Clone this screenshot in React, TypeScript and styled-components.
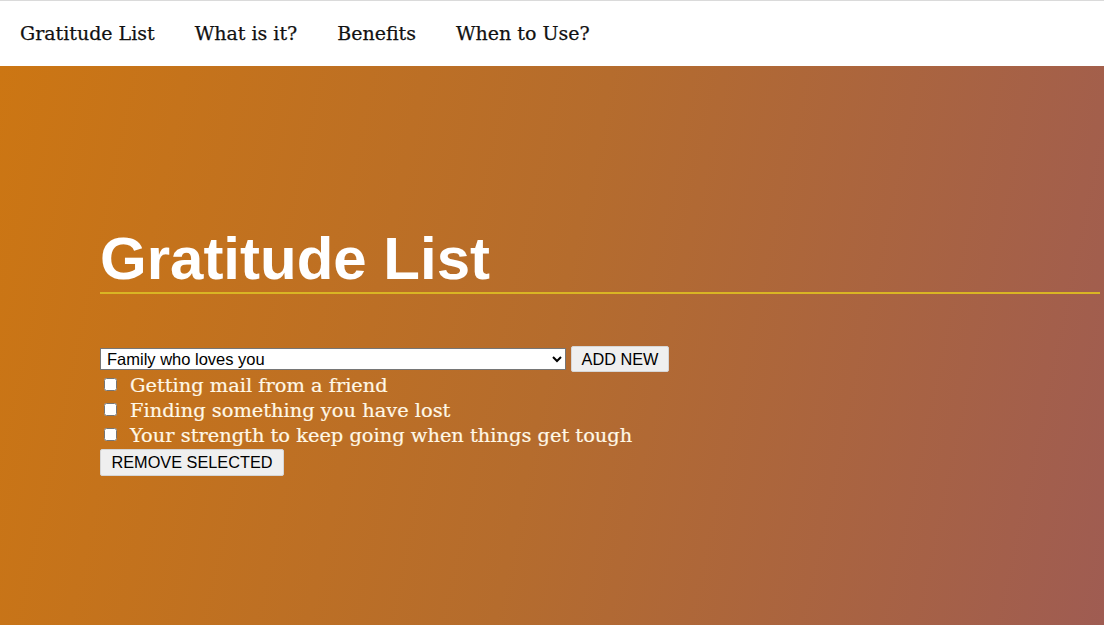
import React, { useState } from "react";
import styled, { createGlobalStyle } from "styled-components";

const Global = createGlobalStyle`
  html, body { margin: 0; padding: 0; }
  body { font-family: "DejaVu Serif", serif; background: #fff; }
`;

const Page = styled.div`
  display: flex;
  flex-direction: column;
  min-height: 625px;
`;

const Nav = styled.nav`
  display: flex;
  align-items: center;
  height: 65px;
  border-top: 1px solid #dadada;
  background: #fff;
`;

const NavItem = styled.a`
  font-family: "DejaVu Serif", serif;
  font-size: 19px;
  color: #111;
  text-decoration: none;
  padding: 0 20px 2px;
  line-height: 24px;
  -webkit-text-stroke: 0.25px #111;
`;

const Hero = styled.main`
  flex: 1;
  background: linear-gradient(102deg, #cc7613 0%, #b56c2d 50%, #9f5c52 100%);
  padding: 160px 4px 0 100px;
  display: flex;
  flex-direction: column;
`;

const Title = styled.h1`
  margin: 0;
  font-family: "Liberation Sans", Arial, sans-serif;
  font-weight: 700;
  font-size: 60px;
  line-height: 66px;
  color: #fff;
  border-bottom: 2px solid #d9b524;
`;

const Form = styled.div`
  margin-top: 52px;
  display: flex;
  flex-direction: column;
  align-items: flex-start;
`;

const AddRow = styled.div`
  display: flex;
  align-items: center;
  gap: 5px;
  height: 26px;
`;

const Select = styled.select`
  width: 466px;
  height: 22px;
  font-family: "Liberation Sans", Arial, sans-serif;
  font-size: 16.5px;
  color: #000;
  background: #fff;
  border: 1px solid #767676;
  border-radius: 0;
  padding: 0 2px;
  margin: 0;
`;

const Button = styled.button<{ $w: number; $h: number }>`
  width: ${(p) => p.$w}px;
  height: ${(p) => p.$h}px;
  font-family: "Liberation Sans", Arial, sans-serif;
  font-size: 16.3px;
  color: #000;
  background: #efefef;
  border: 1px solid #d6d6d6;
  border-radius: 2px;
  padding: 0;
  margin: 0;
`;

const List = styled.ul`
  list-style: none;
  margin: 0;
  padding: 0;
`;

const Item = styled.li`
  display: flex;
  align-items: center;
  height: 25px;
`;

const Check = styled.input`
  width: 13px;
  height: 13px;
  margin: 0 13px 0 4px;
`;

const Label = styled.label`
  font-family: "DejaVu Serif", serif;
  font-size: 19.4px;
  line-height: 25px;
  padding-top: 2px;
  color: #fff8e7;
  white-space: nowrap;
  -webkit-text-stroke: 0.2px #fff8e7;
`;

const RemoveWrap = styled.div`
  margin-top: 2px;
`;

const options = [
  "Family who loves you",
  "Getting mail from a friend",
  "Finding something you have lost",
  "Your strength to keep going when things get tough",
];

export default function App() {
  const [items] = useState([
    "Getting mail from a friend",
    "Finding something you have lost",
    "Your strength to keep going when things get tough",
  ]);
  return (
    <Page>
      <Global />
      <Nav>
        <NavItem href="#">Gratitude List</NavItem>
        <NavItem href="#">What is it?</NavItem>
        <NavItem href="#">Benefits</NavItem>
        <NavItem href="#">When to Use?</NavItem>
      </Nav>
      <Hero>
        <Title>Gratitude List</Title>
        <Form>
          <AddRow>
            <Select defaultValue={options[0]}>
              {options.map((o) => (
                <option key={o}>{o}</option>
              ))}
            </Select>
            <Button $w={98} $h={26}>ADD NEW</Button>
          </AddRow>
          <List>
            {items.map((t, i) => (
              <Item key={t}>
                <Check type="checkbox" id={`c${i}`} />
                <Label htmlFor={`c${i}`}>{t}</Label>
              </Item>
            ))}
          </List>
          <RemoveWrap>
            <Button $w={184} $h={27}>REMOVE SELECTED</Button>
          </RemoveWrap>
        </Form>
      </Hero>
    </Page>
  );
}
